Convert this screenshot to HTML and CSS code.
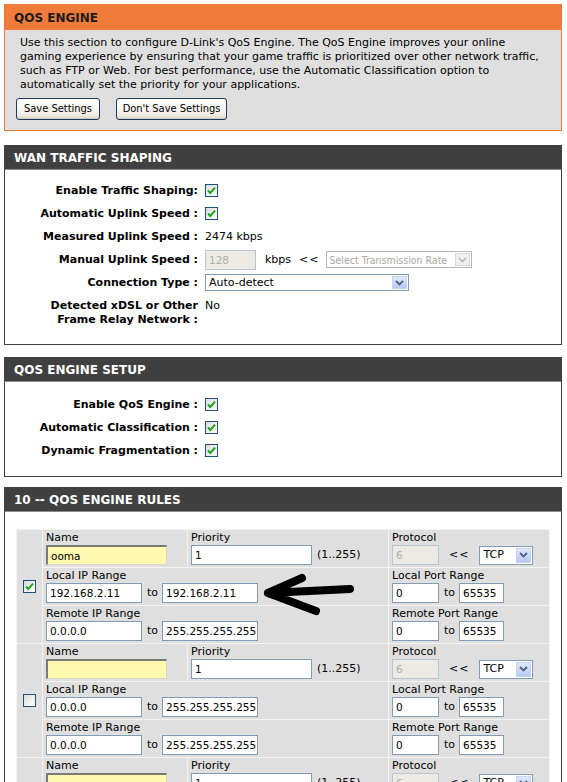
FILE: index.html
```html
<!DOCTYPE html>
<html>
<head>
<meta charset="utf-8">
<link rel="stylesheet" href="styles.css">
</head>
<body>
<section class="box box-orange">
  <h2 class="box-title">QOS ENGINE</h2>
  <div class="intro">
    <p class="intro-text">Use this section to configure D-Link's QoS Engine. The QoS Engine improves your online<br>gaming experience by ensuring that your game traffic is prioritized over other network traffic,<br>such as FTP or Web. For best performance, use the Automatic Classification option to<br>automatically set the priority for your applications.</p>
    <div class="buttons">
      <span class="btn btn-save">Save Settings</span>
      <span class="btn btn-dont">Don't Save Settings</span>
    </div>
  </div>
</section>

<section class="box box-wan">
  <h2 class="box-title">WAN TRAFFIC SHAPING</h2>
  <div class="form form-wan">
    <div class="lab">Enable Traffic Shaping:</div>
    <div class="val"><span class="cb on"><svg viewBox="0 0 13 13" width="13" height="13"><polyline points="3,6.5 5.3,9 10,3.6" fill="none" stroke="#21a121" stroke-width="2"/></svg></span></div>
    <div class="lab">Automatic Uplink Speed :</div>
    <div class="val"><span class="cb on"><svg viewBox="0 0 13 13" width="13" height="13"><polyline points="3,6.5 5.3,9 10,3.6" fill="none" stroke="#21a121" stroke-width="2"/></svg></span></div>
    <div class="lab">Measured Uplink Speed :</div>
    <div class="val">2474 kbps</div>
    <div class="lab">Manual Uplink Speed :</div>
    <div class="val"><span class="inp dis w-manual">128</span><span class="unit">kbps</span><span class="ll">&lt;&lt;</span><span class="sel sel-dis w-rate"><span class="sel-text">Select Transmission Rate</span><span class="sel-btn"><svg viewBox="0 0 9 6" width="9" height="6"><polyline points="1,1 4.5,4.5 8,1" fill="none" stroke="#b8b8b8" stroke-width="1.6"/></svg></span></span></div>
    <div class="lab">Connection Type :</div>
    <div class="val"><span class="sel w-conn"><span class="sel-text">Auto-detect</span><span class="sel-btn"><svg viewBox="0 0 9 6" width="9" height="6"><polyline points="1,1 4.5,4.5 8,1" fill="none" stroke="#4d6185" stroke-width="1.8"/></svg></span></span></div>
    <div class="lab lab-two">Detected xDSL or Other<br>Frame Relay Network :</div>
    <div class="val val-top">No</div>
  </div>
</section>

<section class="box box-setup">
  <h2 class="box-title">QOS ENGINE SETUP</h2>
  <div class="form form-setup">
    <div class="lab">Enable QoS Engine :</div>
    <div class="val"><span class="cb on"><svg viewBox="0 0 13 13" width="13" height="13"><polyline points="3,6.5 5.3,9 10,3.6" fill="none" stroke="#21a121" stroke-width="2"/></svg></span></div>
    <div class="lab">Automatic Classification :</div>
    <div class="val"><span class="cb on"><svg viewBox="0 0 13 13" width="13" height="13"><polyline points="3,6.5 5.3,9 10,3.6" fill="none" stroke="#21a121" stroke-width="2"/></svg></span></div>
    <div class="lab">Dynamic Fragmentation :</div>
    <div class="val"><span class="cb on"><svg viewBox="0 0 13 13" width="13" height="13"><polyline points="3,6.5 5.3,9 10,3.6" fill="none" stroke="#21a121" stroke-width="2"/></svg></span></div>
  </div>
</section>

<section class="box box-last">
  <h2 class="box-title">10 -- QOS ENGINE RULES</h2>
  <div class="rules-body">
    <div class="rules-wrap">
      <table class="rules">
        <colgroup><col class="c-cb"><col class="c-name"><col class="c-pri"><col class="c-proto"></colgroup>
        <tbody>
          <tr>
            <td class="cbcell" rowspan="3"><span class="cb on"><svg viewBox="0 0 13 13" width="13" height="13"><polyline points="3,6.5 5.3,9 10,3.6" fill="none" stroke="#21a121" stroke-width="2"/></svg></span></td>
            <td><div class="cl">Name</div><div class="line"><span class="inp name">ooma</span></div></td>
            <td><div class="cl">Priority</div><div class="line"><span class="inp w-pri">1</span><span class="hint">(1..255)</span></div></td>
            <td><div class="cl">Protocol</div><div class="line"><span class="inp dis w-port">6</span><span class="ll2">&lt;&lt;</span><span class="sel w-tcp"><span class="sel-text">TCP</span><span class="sel-btn"><svg viewBox="0 0 9 6" width="9" height="6"><polyline points="1,1 4.5,4.5 8,1" fill="none" stroke="#4d6185" stroke-width="1.8"/></svg></span></span></div></td>
          </tr>
          <tr>
            <td colspan="2"><div class="cl">Local IP Range</div><div class="line"><span class="inp w-ip">192.168.2.11</span><span class="to">to</span><span class="inp w-ip">192.168.2.11</span></div></td>
            <td><div class="cl">Local Port Range</div><div class="line"><span class="inp w-port">0</span><span class="to">to</span><span class="inp w-port2">65535</span></div></td>
          </tr>
          <tr>
            <td colspan="2"><div class="cl">Remote IP Range</div><div class="line"><span class="inp w-ip">0.0.0.0</span><span class="to">to</span><span class="inp w-ip">255.255.255.255</span></div></td>
            <td><div class="cl">Remote Port Range</div><div class="line"><span class="inp w-port">0</span><span class="to">to</span><span class="inp w-port2">65535</span></div></td>
          </tr>

          <tr>
            <td class="cbcell" rowspan="3"><span class="cb"></span></td>
            <td><div class="cl">Name</div><div class="line"><span class="inp name"></span></div></td>
            <td><div class="cl">Priority</div><div class="line"><span class="inp w-pri">1</span><span class="hint">(1..255)</span></div></td>
            <td><div class="cl">Protocol</div><div class="line"><span class="inp dis w-port">6</span><span class="ll2">&lt;&lt;</span><span class="sel w-tcp"><span class="sel-text">TCP</span><span class="sel-btn"><svg viewBox="0 0 9 6" width="9" height="6"><polyline points="1,1 4.5,4.5 8,1" fill="none" stroke="#4d6185" stroke-width="1.8"/></svg></span></span></div></td>
          </tr>
          <tr>
            <td colspan="2"><div class="cl">Local IP Range</div><div class="line"><span class="inp w-ip">0.0.0.0</span><span class="to">to</span><span class="inp w-ip">255.255.255.255</span></div></td>
            <td><div class="cl">Local Port Range</div><div class="line"><span class="inp w-port">0</span><span class="to">to</span><span class="inp w-port2">65535</span></div></td>
          </tr>
          <tr>
            <td colspan="2"><div class="cl">Remote IP Range</div><div class="line"><span class="inp w-ip">0.0.0.0</span><span class="to">to</span><span class="inp w-ip">255.255.255.255</span></div></td>
            <td><div class="cl">Remote Port Range</div><div class="line"><span class="inp w-port">0</span><span class="to">to</span><span class="inp w-port2">65535</span></div></td>
          </tr>

          <tr>
            <td class="cbcell" rowspan="3"><span class="cb"></span></td>
            <td><div class="cl">Name</div><div class="line"><span class="inp name"></span></div></td>
            <td><div class="cl">Priority</div><div class="line"><span class="inp w-pri">1</span><span class="hint">(1..255)</span></div></td>
            <td><div class="cl">Protocol</div><div class="line"><span class="inp dis w-port">6</span><span class="ll2">&lt;&lt;</span><span class="sel w-tcp"><span class="sel-text">TCP</span><span class="sel-btn"><svg viewBox="0 0 9 6" width="9" height="6"><polyline points="1,1 4.5,4.5 8,1" fill="none" stroke="#4d6185" stroke-width="1.8"/></svg></span></span></div></td>
          </tr>
          <tr>
            <td colspan="2"><div class="cl">Local IP Range</div><div class="line"><span class="inp w-ip">0.0.0.0</span><span class="to">to</span><span class="inp w-ip">255.255.255.255</span></div></td>
            <td><div class="cl">Local Port Range</div><div class="line"><span class="inp w-port">0</span><span class="to">to</span><span class="inp w-port2">65535</span></div></td>
          </tr>
          <tr>
            <td colspan="2"><div class="cl">Remote IP Range</div><div class="line"><span class="inp w-ip">0.0.0.0</span><span class="to">to</span><span class="inp w-ip">255.255.255.255</span></div></td>
            <td><div class="cl">Remote Port Range</div><div class="line"><span class="inp w-port">0</span><span class="to">to</span><span class="inp w-port2">65535</span></div></td>
          </tr>
        </tbody>
      </table>
      <svg class="arrow" viewBox="0 0 100 50" width="100" height="50">
        <path d="M8 24 L90 20 M8 24 L42 9 M8 24 L56 42" fill="none" stroke="#000" stroke-width="8" stroke-linecap="round" stroke-linejoin="round"/>
      </svg>
    </div>
  </div>
</section>
</body>
</html>
```
FILE: styles.css
```css
* { box-sizing: border-box; }

body {
  margin: 0;
  padding: 4px 5px 0 4px;
  background: #fff;
  color: #000;
  font-family: "DejaVu Sans", "Liberation Sans", sans-serif;
  font-size: 11px;
  line-height: 14px;
}

.box {
  border: 1px solid #404040;
  margin-bottom: 12px;
  background: #fff;
}

.box-title {
  margin: 0;
  height: 24px;
  padding: 4px 0 0 9px;
  background: #404040;
  color: #fff;
  font-size: 12px;
  line-height: 16px;
  font-weight: bold;
  border-bottom: 1px solid #8a8a8a;
}

.box-orange {
  border-color: #e9783c;
  background: #dfdfdf;
  margin-bottom: 14px;
}

.box-orange .box-title {
  background: #f07b3b;
  color: #1a1a1a;
  border-bottom: none;
  height: 25px;
  padding-top: 5px;
}

.box-setup { margin-bottom: 10px; }

.intro {
  padding: 6px 15px 10px 11px;
}

.intro-text {
  margin: 0 0 6px 0;
  padding-left: 4px;
  line-height: 14px;
  white-space: nowrap;
}

.buttons {
  display: flex;
  gap: 16px;
}

.btn {
  display: inline-flex;
  align-items: center;
  justify-content: center;
  height: 22px;
  border: 1px solid #1b3a5c;
  border-radius: 3px;
  background: linear-gradient(#ffffff, #f2f1ea 70%, #dedbcf);
  box-shadow: inset 0 -1px 0 #cdc9bb;
  font-stretch: condensed;
  white-space: nowrap;
}

.btn-save { width: 84px; }
.btn-dont { width: 111px; }

.form {
  display: grid;
  grid-template-columns: 193px 1fr;
  column-gap: 7px;
}

.form-wan { padding: 9px 0 17px 0; }
.form-setup { padding: 11px 0 14px 0; }

.lab {
  text-align: right;
  font-weight: bold;
  height: 23px;
  display: flex;
  align-items: center;
  justify-content: flex-end;
  white-space: nowrap;
}

.lab-two {
  height: 33px;
  padding-top: 5px;
  line-height: 14px;
  display: block;
}

.val {
  height: 23px;
  display: flex;
  align-items: center;
}

.val-top {
  align-items: flex-start;
  padding-top: 5px;
}

.cb {
  display: inline-block;
  width: 13px;
  height: 13px;
  border: 1px solid #1c5180;
  background: linear-gradient(135deg, #dcdcd7, #ffffff);
  position: relative;
}

.cb svg {
  position: absolute;
  left: -1px;
  top: -1px;
}

.inp {
  display: inline-flex;
  align-items: center;
  height: 20px;
  padding: 0 3px;
  border: 1px solid #7f9db9;
  background: #fff;
  white-space: nowrap;
  overflow: hidden;
  font-size: 10.5px;
}

.inp.dis {
  background: #ebebe4;
  color: #b0b0a8;
  border-color: #b8c6d4;
}

.inp.name {
  width: 121px;
  background: #fff9b0;
  border-top: 2px solid #7a7a7a;
  border-left: 2px solid #7a7a7a;
  border-right: 1px solid #d8d4c8;
  border-bottom: 1px solid #d8d4c8;
}

.w-manual { width: 51px; }
.unit { margin-left: 9px; }
.ll { margin-left: 8px; margin-right: 6px; letter-spacing: 1px; }
.ll2 { margin-left: 10px; margin-right: 10px; letter-spacing: 1px; }

.sel {
  display: inline-flex;
  align-items: center;
  height: 17px;
  border: 1px solid #7f9db9;
  background: #fff;
  padding-left: 3px;
  justify-content: space-between;
}

.sel-text { white-space: nowrap; overflow: hidden; }

.sel-btn {
  flex: none;
  width: 15px;
  height: 13px;
  margin-right: 1px;
  background: linear-gradient(#dfe7fb, #b6c8f3);
  border: 1px solid #c6d3f0;
  display: flex;
  align-items: center;
  justify-content: center;
}

.sel-dis {
  border-color: #b8b8b0;
  color: #a8a8a0;
  font-stretch: condensed;
  font-size: 10.5px;
}

.sel-dis .sel-btn {
  background: #f0f0ec;
  border-color: #d8d8d0;
}

.w-rate { width: 146px; }
.w-conn { width: 204px; }
.w-tcp { width: 54px; height: 19px; }
.w-tcp .sel-btn { height: 15px; }

.box-last { margin-bottom: 0; }

.rules-body {
  padding: 17px 11px 20px 11px;
}

.rules-wrap { position: relative; }

.rules {
  width: 100%;
  table-layout: fixed;
  border-collapse: separate;
  border-spacing: 1px;
  background: #f4f4f4;
  font-size: 11px;
}

.c-cb { width: 25px; }
.c-name { width: 144px; }
.c-pri { width: 200px; }

.rules td {
  background: #dfdfdf;
  padding: 1px 2px 2px 3px;
  vertical-align: top;
}

.rules td.cbcell {
  vertical-align: middle;
  text-align: center;
  padding: 0;
}

.rules .cbcell .cb { vertical-align: middle; }

.cl { line-height: 14px; height: 14px; white-space: nowrap; }

.line {
  display: flex;
  align-items: center;
  white-space: nowrap;
}

.w-pri { width: 121px; }
.hint { margin-left: 5px; }
.w-ip { width: 96px; }
.w-port { width: 47px; }
.w-port2 { width: 45px; }
.to { margin: 0 4px 0 5px; }

.arrow {
  position: absolute;
  left: 244px;
  top: 40px;
}
```
